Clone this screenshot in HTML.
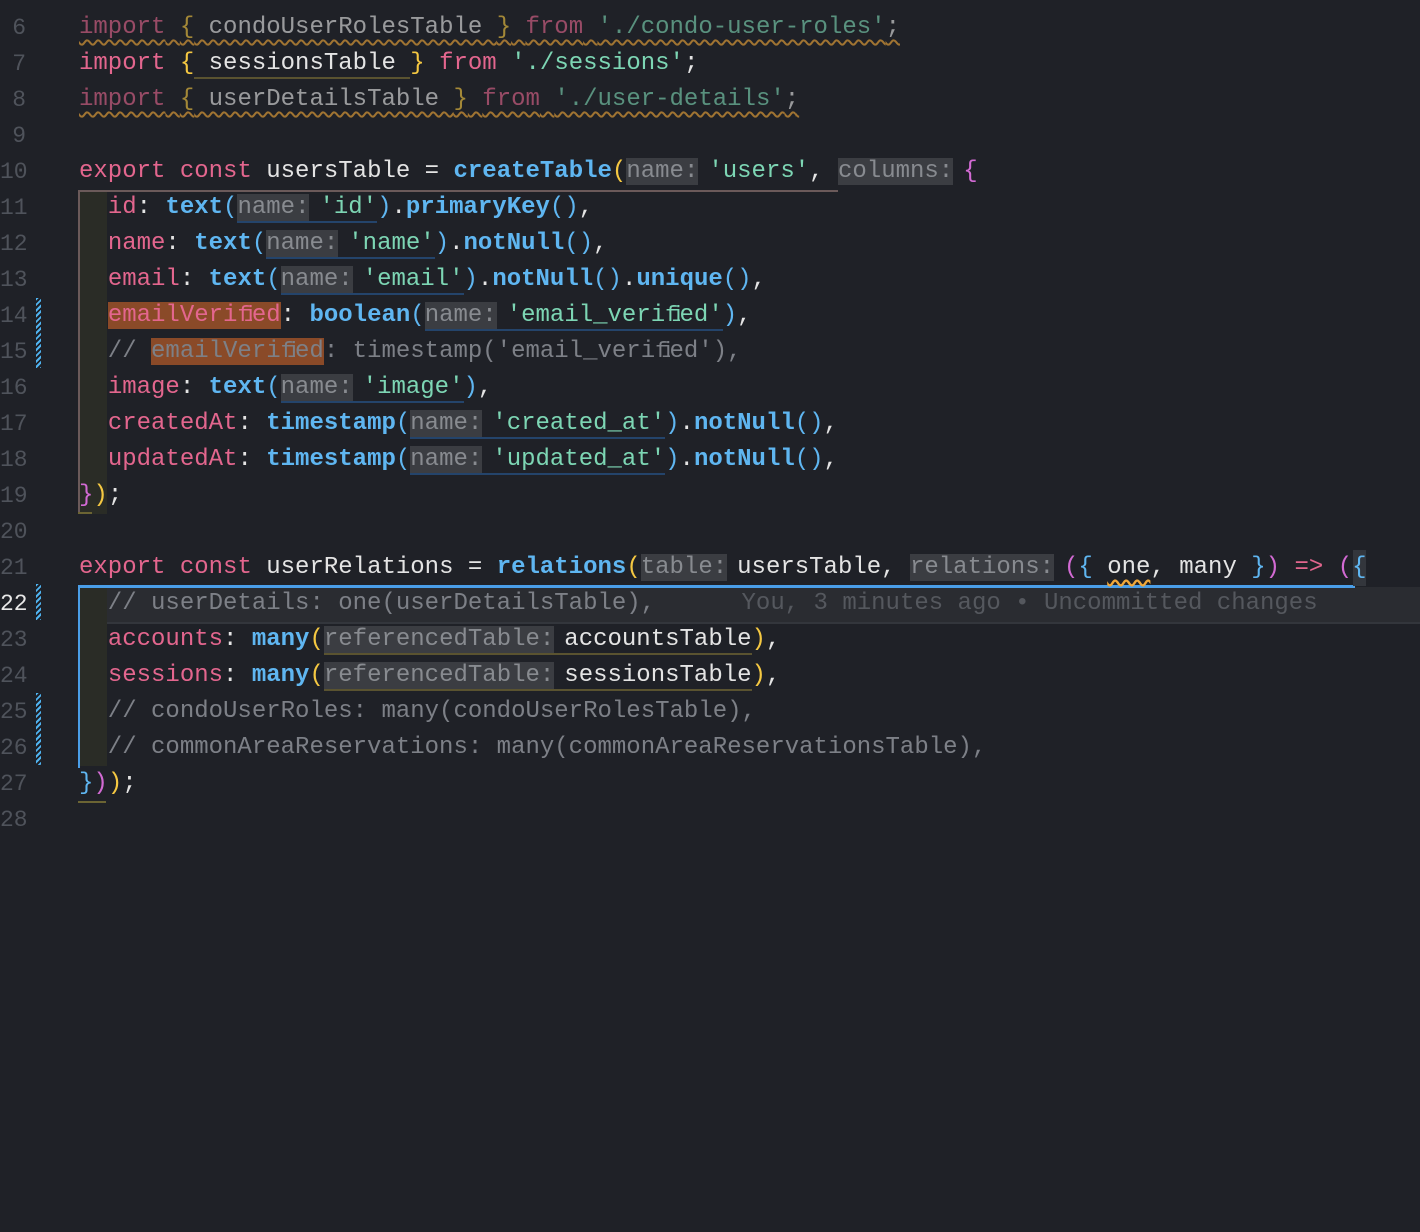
<!DOCTYPE html>
<html><head><meta charset="utf-8"><style>
html,body{margin:0;padding:0;background:#1f2127;width:1420px;height:1232px;overflow:hidden}
body{font-family:"Liberation Mono",monospace;font-size:24px;position:relative}
.ln{position:absolute;left:0;width:26px;text-align:right;color:#4f535b;height:36px;line-height:36px;font-size:23px}
.ln.cur{color:#e8e8e8}
.l{position:absolute;left:79px;height:36px;line-height:36px;white-space:pre;color:#e4e4e4}
.k{color:#e3668e}.f{color:#5fb6f1;font-weight:bold}.s{color:#7dd6b4}.c{color:#7d8087}
.p{color:#5fb6f1}.y{color:#f5c842}.m{color:#d26ad3}.w{color:#e4e4e4}
.h{background:#3b3d42;color:#888b90;margin-right:10px}
.u{border-bottom:2px solid #24446b}
.ug{border-bottom:2px solid #5a5330}
.dim{opacity:.62}
.sq{text-decoration:underline wavy #f0a83a;text-decoration-thickness:2px;text-underline-offset:6px}
.hl{background:#8a4a28}
.fi{display:inline-block;width:14.4px;overflow:hidden;vertical-align:top;letter-spacing:-7px;font-size:22px}
.gut{position:absolute;left:36px;width:5px;background:repeating-linear-gradient(135deg,#4fb3f0 0 2px,transparent 2px 4px)}
#t{position:absolute;left:0;top:3px;width:1420px;height:1229px}
</style></head><body>
<div style="position:absolute;left:79px;top:0;width:1054px;height:8px;overflow:hidden">
<svg width="1054" height="8"><defs><pattern id="wv" width="12" height="8" patternUnits="userSpaceOnUse"><path d="M0 5 Q3 0 6 5 T12 5" stroke="#f0a83a" stroke-width="2" fill="none"/></pattern></defs><rect width="1054" height="8" fill="url(#wv)"/></svg></div>
<div id="t">
<div style="position:absolute;left:79px;top:187px;width:28px;height:324px;background:#2a2c26"></div>
<div style="position:absolute;left:78px;top:187px;width:758px;height:322px;border-left:2px solid #6b5a5a;border-top:2px solid #6b5a5a"></div>
<div style="position:absolute;left:78px;top:509px;width:14px;height:2px;background:#6b6433"></div>
<div style="position:absolute;left:79px;top:584px;width:1341px;height:35px;background:#2a2c31;border-bottom:2px solid #33363c"></div>
<div style="position:absolute;left:79px;top:583px;width:28px;height:180px;background:#2a2c26"></div>
<div style="position:absolute;left:78px;top:582px;width:1275px;height:180px;border-left:2px solid #4a9ee8;border-top:3px solid #4a9ee8"></div>
<div style="position:absolute;left:1353px;top:547px;width:13px;height:36px;background:#33363c"></div>
<div style="position:absolute;left:78px;top:798px;width:28px;height:2px;background:#6b6433"></div>

<div class="gut" style="top:295px;height:70px"></div>
<div class="gut" style="top:581px;height:36px"></div>
<div class="gut" style="top:690px;height:72px"></div>

<div class="ln" style="top:7px">6</div>
<div class="ln" style="top:43px">7</div>
<div class="ln" style="top:79px">8</div>
<div class="ln" style="top:115px">9</div>
<div class="ln" style="top:151px">10</div>
<div class="ln" style="top:187px">11</div>
<div class="ln" style="top:223px">12</div>
<div class="ln" style="top:259px">13</div>
<div class="ln" style="top:295px">14</div>
<div class="ln" style="top:331px">15</div>
<div class="ln" style="top:367px">16</div>
<div class="ln" style="top:403px">17</div>
<div class="ln" style="top:439px">18</div>
<div class="ln" style="top:475px">19</div>
<div class="ln" style="top:511px">20</div>
<div class="ln" style="top:547px">21</div>
<div class="ln cur" style="top:583px">22</div>
<div class="ln" style="top:619px">23</div>
<div class="ln" style="top:655px">24</div>
<div class="ln" style="top:691px">25</div>
<div class="ln" style="top:727px">26</div>
<div class="ln" style="top:763px">27</div>
<div class="ln" style="top:799px">28</div>

<div class="l sq" style="top:7px"><span class="dim"><span class="k">import</span> <span class="y">{</span> condoUserRolesTable <span class="y">}</span> <span class="k">from</span> <span class="s">'./condo-user-roles'</span>;</span></div>
<div class="l" style="top:43px"><span class="k">import</span> <span class="y">{</span><span class="ug"> sessionsTable </span><span class="y">}</span> <span class="k">from</span> <span class="s">'./sessions'</span>;</div>
<div class="l sq" style="top:79px"><span class="dim"><span class="k">import</span> <span class="y">{</span> userDetailsTable <span class="y">}</span> <span class="k">from</span> <span class="s">'./user-details'</span>;</span></div>

<div class="l" style="top:151px"><span class="k">export</span> <span class="k">const</span> usersTable = <span class="f">createTable</span><span class="y">(</span><span class="h">name:</span><span class="s">'users'</span>, <span class="h">columns:</span><span class="m">{</span></div>
<div class="l" style="top:187px">  <span class="k">id</span>: <span class="f">text</span><span class="p">(</span><span class="u"><span class="h">name:</span><span class="s">'id'</span></span><span class="p">)</span>.<span class="f">primaryKey</span><span class="p">()</span>,</div>
<div class="l" style="top:223px">  <span class="k">name</span>: <span class="f">text</span><span class="p">(</span><span class="u"><span class="h">name:</span><span class="s">'name'</span></span><span class="p">)</span>.<span class="f">notNull</span><span class="p">()</span>,</div>
<div class="l" style="top:259px">  <span class="k">email</span>: <span class="f">text</span><span class="p">(</span><span class="u"><span class="h">name:</span><span class="s">'email'</span></span><span class="p">)</span>.<span class="f">notNull</span><span class="p">()</span>.<span class="f">unique</span><span class="p">()</span>,</div>
<div class="l" style="top:295px">  <span class="k hl">emailVeri<span class="fi">fi</span>ed</span>: <span class="f">boolean</span><span class="p">(</span><span class="u"><span class="h">name:</span><span class="s">'email_veri<span class="fi">fi</span>ed'</span></span><span class="p">)</span>,</div>
<div class="l c" style="top:331px">  // <span class="hl">emailVeri<span class="fi">fi</span>ed</span>: timestamp('email_veri<span class="fi">fi</span>ed'),</div>
<div class="l" style="top:367px">  <span class="k">image</span>: <span class="f">text</span><span class="p">(</span><span class="u"><span class="h">name:</span><span class="s">'image'</span></span><span class="p">)</span>,</div>
<div class="l" style="top:403px">  <span class="k">createdAt</span>: <span class="f">timestamp</span><span class="p">(</span><span class="u"><span class="h">name:</span><span class="s">'created_at'</span></span><span class="p">)</span>.<span class="f">notNull</span><span class="p">()</span>,</div>
<div class="l" style="top:439px">  <span class="k">updatedAt</span>: <span class="f">timestamp</span><span class="p">(</span><span class="u"><span class="h">name:</span><span class="s">'updated_at'</span></span><span class="p">)</span>.<span class="f">notNull</span><span class="p">()</span>,</div>
<div class="l" style="top:475px"><span class="m">}</span><span class="y">)</span>;</div>

<div class="l" style="top:547px"><span class="k">export</span> <span class="k">const</span> userRelations = <span class="f">relations</span><span class="y">(</span><span class="h">table:</span>usersTable, <span class="h">relations:</span><span class="m">(</span><span class="p">{</span> <span style="text-decoration:underline wavy #f0a83a;text-underline-offset:6px">one</span>, many <span class="p">}</span><span class="m">)</span> <span class="k">=&gt;</span> <span class="m">(</span><span class="p">{</span></div>
<div class="l c" style="top:583px">  // userDetails: one(userDetailsTable),      <span style="color:#55585e">You, 3 minutes ago • Uncommitted changes</span></div>
<div class="l" style="top:619px">  <span class="k">accounts</span>: <span class="f">many</span><span class="y">(</span><span class="ug"><span class="h">referencedTable:</span>accountsTable</span><span class="y">)</span>,</div>
<div class="l" style="top:655px">  <span class="k">sessions</span>: <span class="f">many</span><span class="y">(</span><span class="ug"><span class="h">referencedTable:</span>sessionsTable</span><span class="y">)</span>,</div>
<div class="l c" style="top:691px">  // condoUserRoles: many(condoUserRolesTable),</div>
<div class="l c" style="top:727px">  // commonAreaReservations: many(commonAreaReservationsTable),</div>
<div class="l" style="top:763px"><span class="p">}</span><span class="m">)</span><span class="y">)</span>;</div>
</div>
</body></html>
